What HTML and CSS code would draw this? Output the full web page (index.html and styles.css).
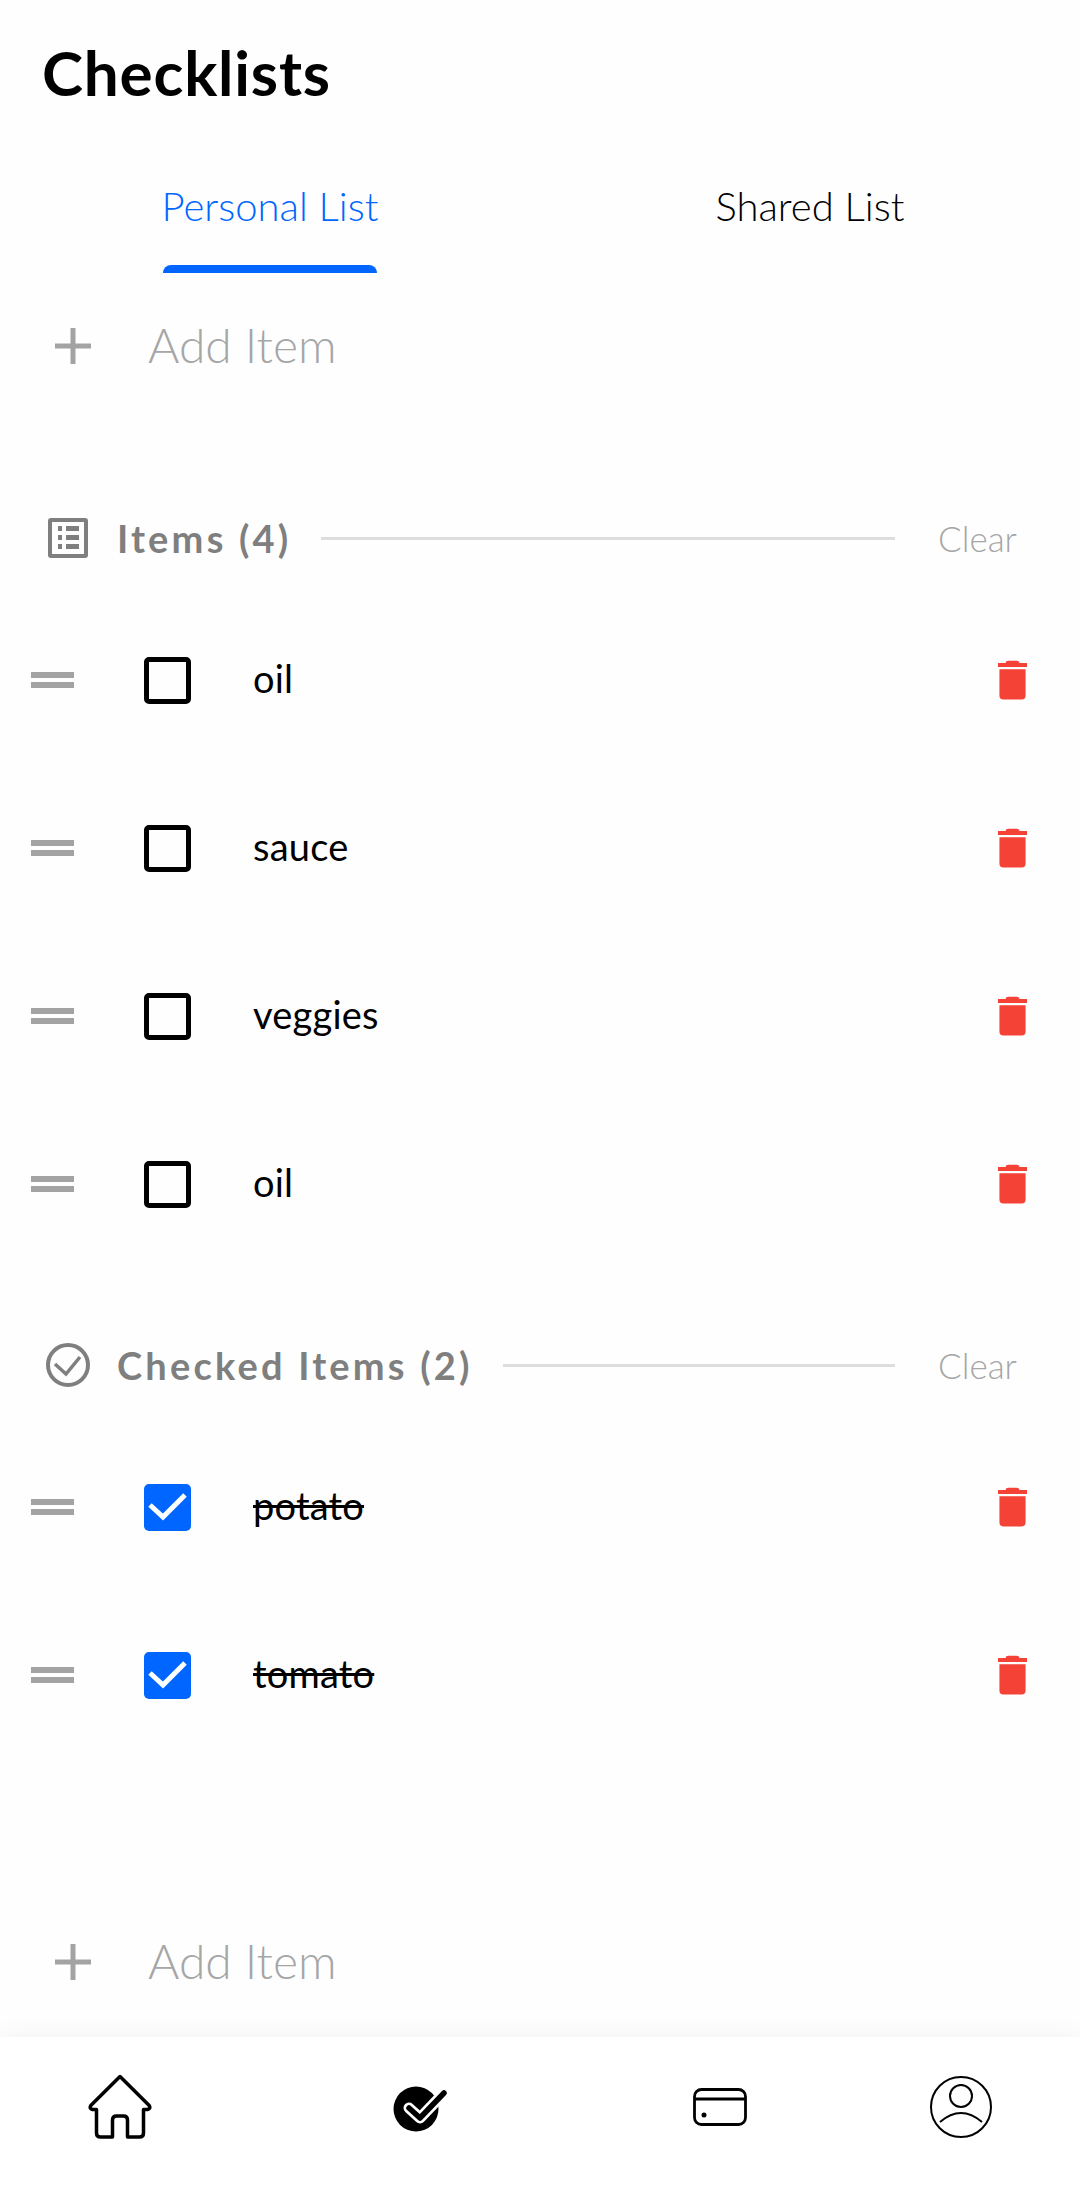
FILE: index.html
```html
<!DOCTYPE html>
<html lang="en">
<head>
    <meta charset="UTF-8">
    <title>Checklists</title>
    <link rel="stylesheet" href="styles.css">
</head>
<body>

<div class="page">
    <h1 class="title">Checklists</h1>

    <div class="tabs">
        <div class="tab tab-active">
            <span class="tab-label">Personal List</span>
            <span class="tab-bar"></span>
        </div>
        <div class="tab">
            <span class="tab-label">Shared List</span>
        </div>
    </div>

    <div class="add-row add-top">
        <svg class="add-icon" viewBox="0 0 36 36"><path d="M18 0V36M0 18H36"/></svg>
        <span class="add-text">Add Item</span>
    </div>

    <div class="section-head section-items">
        <svg class="section-icon" viewBox="0 0 40 40">
            <rect x="2" y="2" width="36" height="36" rx="1"/>
            <path class="thin" d="M18 10.500H31M18 19.500H31M18 28.500H31M10 10.500H14M10 19.500H14M10 28.500H14"/>
        </svg>
        <span class="section-text">Items (4)</span>
        <span class="section-line"></span>
        <span class="section-clear">Clear</span>
    </div>

    <div class="row">
        <div class="drag"></div>
        <div class="box"></div>
        <span class="item-text">oil</span>
        <svg class="trash" viewBox="0 0 32 40"><path d="M9 2.500Q9 0 12 0H20Q23 0 23 2.500H31V6.500H1V2.500ZM2.500 9H29.500V36Q29.500 40 25.500 40H6.500Q2.500 40 2.500 36Z"/></svg>
    </div>
    <div class="row">
        <div class="drag"></div>
        <div class="box"></div>
        <span class="item-text">sauce</span>
        <svg class="trash" viewBox="0 0 32 40"><path d="M9 2.500Q9 0 12 0H20Q23 0 23 2.500H31V6.500H1V2.500ZM2.500 9H29.500V36Q29.500 40 25.500 40H6.500Q2.500 40 2.500 36Z"/></svg>
    </div>
    <div class="row">
        <div class="drag"></div>
        <div class="box"></div>
        <span class="item-text">veggies</span>
        <svg class="trash" viewBox="0 0 32 40"><path d="M9 2.500Q9 0 12 0H20Q23 0 23 2.500H31V6.500H1V2.500ZM2.500 9H29.500V36Q29.500 40 25.500 40H6.500Q2.500 40 2.500 36Z"/></svg>
    </div>
    <div class="row">
        <div class="drag"></div>
        <div class="box"></div>
        <span class="item-text">oil</span>
        <svg class="trash" viewBox="0 0 32 40"><path d="M9 2.500Q9 0 12 0H20Q23 0 23 2.500H31V6.500H1V2.500ZM2.500 9H29.500V36Q29.500 40 25.500 40H6.500Q2.500 40 2.500 36Z"/></svg>
    </div>

    <div class="section-head section-checked">
        <svg class="section-icon" viewBox="0 0 44 44">
            <circle cx="22" cy="22" r="20"/>
            <path class="thin" d="M9 21L20 31L34 14"/>
        </svg>
        <span class="section-text">Checked Items (2)</span>
        <span class="section-line"></span>
        <span class="section-clear">Clear</span>
    </div>

    <div class="row">
        <div class="drag"></div>
        <div class="box box-checked">
            <svg viewBox="0 0 47 47"><path d="M6 21L19 33L41 11"/></svg>
        </div>
        <span class="item-text item-done">potato</span>
        <svg class="trash" viewBox="0 0 32 40"><path d="M9 2.500Q9 0 12 0H20Q23 0 23 2.500H31V6.500H1V2.500ZM2.500 9H29.500V36Q29.500 40 25.500 40H6.500Q2.500 40 2.500 36Z"/></svg>
    </div>
    <div class="row">
        <div class="drag"></div>
        <div class="box box-checked">
            <svg viewBox="0 0 47 47"><path d="M6 21L19 33L41 11"/></svg>
        </div>
        <span class="item-text item-done">tomato</span>
        <svg class="trash" viewBox="0 0 32 40"><path d="M9 2.500Q9 0 12 0H20Q23 0 23 2.500H31V6.500H1V2.500ZM2.500 9H29.500V36Q29.500 40 25.500 40H6.500Q2.500 40 2.500 36Z"/></svg>
    </div>

    <div class="add-row add-bottom">
        <svg class="add-icon" viewBox="0 0 36 36"><path d="M18 0V36M0 18H36"/></svg>
        <span class="add-text">Add Item</span>
    </div>

    <nav class="nav">
        <div class="nav-item">
            <svg class="nav-home" viewBox="0 0 64 66"><path d="M32 2.500L2.800 31.500Q1 34.500 4.500 35.500H8.500V59Q8.500 63 12.500 63H24.500V46Q24.500 42 28.500 42H35.500Q39.500 42 39.500 46V63H51.500Q55.500 63 55.500 59V35.500H59.500Q63 34.500 61.200 31.500Z"/></svg>
        </div>
        <div class="nav-item nav-item-check">
            <svg class="nav-check" viewBox="0 0 64 54">
                <circle cx="23" cy="29" r="22.500"/>
                <path class="tick-outline" d="M16 28L27 38L50 14"/>
                <path class="tick" d="M16 28L27 38L51 13"/>
            </svg>
        </div>
        <div class="nav-item">
            <svg class="nav-card" viewBox="0 0 54 38">
                <rect x="1.500" y="1.500" width="51" height="35" rx="7"/>
                <path d="M1.500 11H52.500"/>
                <circle class="dot" cx="11" cy="27" r="2.500"/>
            </svg>
        </div>
        <div class="nav-item nav-item-user">
            <svg class="nav-user" viewBox="0 0 64 64">
                <circle cx="32" cy="32" r="30"/>
                <circle cx="32" cy="21" r="11"/>
                <path d="M11 47Q32 29 53 47"/>
            </svg>
        </div>
    </nav>
</div>

</body>
</html>
```

FILE: styles.css
```css
* {
    box-sizing: border-box;
}
body {
    margin: 0;
    background-color: #fefefe;
    font-family: Lato, "Open Sans", sans-serif;
}
.page {
    width: 1080px;
    height: 2189px;
    display: flex;
    flex-direction: column;
}
.title {
    margin: 0;
    height: 150px;
    padding: 37px 0 0 42px;
    font-size: 62px;
    line-height: 70px;
    font-weight: 700;
    letter-spacing: 0.800px;
    color: #000;
}
.tabs {
    display: flex;
    height: 123px;
}
.tab {
    width: 540px;
    height: 123px;
    padding-top: 32px;
    display: flex;
    flex-direction: column;
    align-items: center;
}
.tab-label {
    font-size: 40px;
    line-height: 48px;
    font-weight: 300;
    color: #000;
}
.tab-active .tab-label {
    color: #0066ff;
}
.tab-bar {
    width: 214px;
    height: 8px;
    margin-top: auto;
    background-color: #0066ff;
    border-radius: 8px 8px 0 0;
}
.add-row {
    height: 136px;
    padding-left: 55px;
    display: flex;
    align-items: center;
}
.add-top {
    margin-top: 5px;
}
.add-bottom {
    margin-top: auto;
    margin-bottom: 7px;
}
.add-icon {
    width: 36px;
    height: 36px;
    fill: none;
    stroke: #a3a3a3;
    stroke-width: 5;
}
.add-text {
    margin-left: 57px;
    padding-bottom: 3px;
    font-size: 48px;
    font-weight: 300;
    color: #a6a6a6;
}
.section-head {
    height: 70px;
    margin-bottom: 23px;
    display: flex;
    align-items: center;
    padding-right: 63px;
}
.section-items {
    margin-top: 89px;
    padding-left: 48px;
}
.section-checked {
    margin-top: 62px;
    padding-left: 46px;
}
.section-icon {
    width: 40px;
    height: 40px;
    fill: none;
    stroke: #7f7f7f;
    stroke-width: 4;
}
.section-checked .section-icon {
    width: 44px;
    height: 44px;
}
.section-icon .thin {
    stroke-width: 5;
}
.section-checked .section-icon .thin {
    stroke-width: 3.500;
}
.section-text {
    margin-left: 29px;
    font-size: 38px;
    font-weight: 700;
    letter-spacing: 3.200px;
    color: #7f7f7f;
}
.section-checked .section-text {
    margin-left: 27px;
}
.section-line {
    flex: 1;
    height: 3px;
    margin: 0 43px 0 30px;
    background-color: #dddddd;
}
.section-clear {
    font-size: 35px;
    font-weight: 300;
    color: #a6a6a6;
}
.row {
    height: 168px;
    padding-left: 31px;
    padding-right: 52px;
    display: flex;
    align-items: center;
}
.drag {
    width: 43px;
    height: 16px;
    border-top: 6px solid #a3a3a3;
    border-bottom: 6px solid #a3a3a3;
}
.box {
    width: 47px;
    height: 47px;
    margin-left: 70px;
    border: 5px solid #000;
    border-radius: 5px;
}
.box-checked {
    border: none;
    background-color: #0066ff;
}
.box-checked svg {
    display: block;
    width: 47px;
    height: 47px;
    fill: none;
    stroke: #fff;
    stroke-width: 5;
}
.item-text {
    flex: 1;
    margin-left: 62px;
    padding-bottom: 5px;
    font-size: 38px;
    letter-spacing: 0.200px;
    color: #000;
}
.item-done {
    text-decoration: line-through;
}
.trash {
    width: 31px;
    height: 40px;
    fill: #f44336;
}
.nav {
    height: 152px;
    display: grid;
    grid-template-columns: 240px 360px 240px 240px;
    background-color: #fff;
    box-shadow: 0 -2px 22px rgba(0, 0, 0, 0.05);
}
.nav-item {
    display: flex;
    justify-content: center;
    align-items: center;
    padding-bottom: 12px;
}
.nav-item-check {
    padding-left: 10px;
}
.nav-item-user {
    padding-left: 2px;
}
.nav svg {
    fill: none;
    stroke: #000;
}
.nav-home {
    width: 64px;
    height: 66px;
    stroke-width: 3.500;
    stroke-linejoin: round;
}
.nav-check {
    width: 64px;
    height: 54px;
}
.nav .nav-check circle {
    fill: #000;
    stroke: none;
}
.tick-outline {
    stroke: #fff;
    stroke-width: 11;
    stroke-linecap: round;
    stroke-linejoin: round;
}
.tick {
    stroke-width: 5.500;
    stroke-linecap: round;
    stroke-linejoin: round;
}
.nav-card {
    width: 54px;
    height: 38px;
    stroke-width: 2.800;
}
.nav .dot {
    fill: #000;
    stroke: none;
}
.nav-user {
    width: 64px;
    height: 64px;
    stroke-width: 2;
}
```
